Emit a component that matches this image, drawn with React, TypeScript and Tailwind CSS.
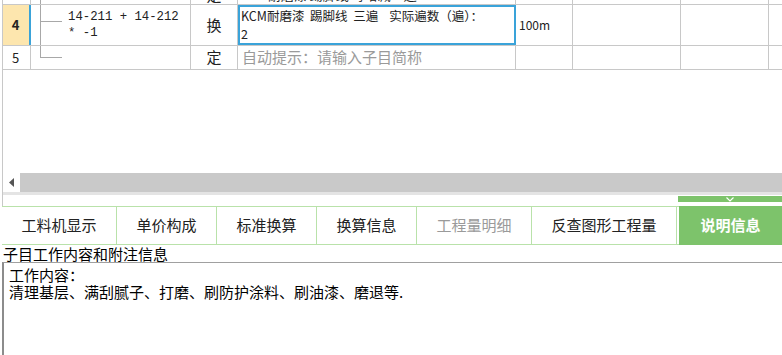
import React from 'react'

const cjk = "font-['Noto_Sans_CJK_SC','Noto_Sans',sans-serif]"
const mono = "font-['Liberation_Mono','Noto_Sans_CJK_SC',monospace]"

const tabs = [
  { label: '工料机显示', w: 'w-[115px]' },
  { label: '单价构成', w: 'w-[100px]' },
  { label: '标准换算', w: 'w-[100px]' },
  { label: '换算信息', w: 'w-[100px]' },
  { label: '工程量明细', w: 'w-[115px]', muted: true },
  { label: '反查图形工程量', w: 'w-[145px]' },
]

// 树形连接线
function Connector({ top }: { top: string }) {
  return (
    <div className="ml-[9px] flex h-full w-[22px] flex-col">
      <div className={`${top} border-b border-l border-[#a8a8a8]`} />
      <div className="flex-1 border-l border-[#a8a8a8]" />
    </div>
  )
}

export default function App() {
  return (
    <div className={`h-[355px] w-[782px] overflow-hidden bg-white text-[#222] ${cjk}`}>
      {/* 表格区 */}
      <div className="ml-[2px] flex h-[206px] flex-col border-l border-[#c8c8c8]">
        {/* 第3行，只露出下沿 */}
        <div className="flex h-[5px] overflow-hidden border-b border-[#c8c8c8]">
          <div className="w-[28px] border-r border-[#c8c8c8]" />
          <div className="w-[160px] border-r border-[#c8c8c8]">
            <div className="ml-[9px] h-full w-[22px] border-l border-[#a8a8a8]" />
          </div>
          <div className="w-[47px] border-r border-[#c8c8c8] text-center text-[15px] leading-[18px]">
            <div className="mt-[-14px]">定</div>
          </div>
          <div className="w-[278px] border-r border-[#c8c8c8] pl-[3px] text-[13px] leading-[18px]">
            <div className="mt-[-14px] whitespace-nowrap">KCM耐磨漆 踢脚线 每增减一遍</div>
          </div>
          <div className="w-[57px] border-r border-[#c8c8c8]" />
          <div className="w-[108px] border-r border-[#c8c8c8]" />
          <div className="w-[88px] border-r border-[#c8c8c8]" />
          <div className="flex-1" />
        </div>

        {/* 第4行（选中） */}
        <div className="flex h-[41px] border-b border-[#c8c8c8]">
          <div className="flex w-[28px] items-center justify-center border-r-2 border-[#3aa3d9] bg-[#fde6ae] pr-[1px] text-[13px] font-bold">
            4
          </div>
          <div className="flex w-[160px] border-r border-[#c8c8c8]">
            <Connector top="h-[17px]" />
            <div className={`flex flex-col justify-center pl-[6px] text-[12.3px] leading-[16px] ${mono}`}>
              <div className="whitespace-pre">14-211 + 14-212</div>
              <div className="whitespace-pre">* -1</div>
            </div>
          </div>
          <div className="flex w-[47px] items-center justify-center border-r border-[#c8c8c8] text-[15px]">
            换
          </div>
          <div className="flex w-[278px] flex-col justify-center border-2 border-[#3aa3d9] pl-[1px] text-[12.5px] leading-[18px]">
            <div className="whitespace-nowrap">KCM耐磨漆&nbsp;&nbsp;踢脚线&nbsp;&nbsp;三遍&nbsp;&nbsp;&nbsp;&nbsp;实际遍数（遍）：</div>
            <div>2</div>
          </div>
          <div className="flex w-[57px] items-center border-r border-[#c8c8c8] pl-[3px] text-[12px]">
            100m
          </div>
          <div className="w-[108px] border-r border-[#c8c8c8]" />
          <div className="w-[88px] border-r border-[#c8c8c8]" />
          <div className="flex-1" />
        </div>

        {/* 第5行 */}
        <div className="flex h-[24px] border-b border-[#c8c8c8]">
          <div className="flex w-[28px] items-center pl-[9px] border-r border-[#c8c8c8] text-[13px]">
            5
          </div>
          <div className="flex w-[160px] border-r border-[#c8c8c8]">
            <div className="ml-[9px] flex h-full w-[22px] flex-col">
              <div className="h-[12px] border-b border-l border-[#a8a8a8]" />
            </div>
          </div>
          <div className="flex w-[47px] items-center justify-center border-r border-[#c8c8c8] text-[15px]">
            定
          </div>
          <div className="flex w-[278px] items-center whitespace-nowrap border-r border-[#c8c8c8] pl-[4px] text-[15px] text-[#9a9a9a]">
            自动提示：请输入子目简称
          </div>
          <div className="w-[57px] border-r border-[#c8c8c8]" />
          <div className="w-[108px] border-r border-[#c8c8c8]" />
          <div className="w-[88px] border-r border-[#c8c8c8]" />
          <div className="flex-1" />
        </div>

        <div className="flex-1" />

        {/* 横向滚动条 */}
        <div className="flex h-[19px]">
          <div className="flex w-[17px] items-center justify-start bg-white pl-[6px]">
            <svg width="5" height="9" viewBox="0 0 5 9">
              <path d="M5 0 L0 4.5 L5 9 Z" fill="#555" />
            </svg>
          </div>
          <div className="flex-1 bg-[#c9c9c9]" />
        </div>
        <div className="h-[3px] bg-[#e4e4e4]" />
        <div className="flex h-[11px] justify-end pt-[1px]">
          <div className="flex h-[6px] w-[104px] items-center justify-center bg-[#7dc36b]">
            <svg width="8" height="5" viewBox="0 0 8 5">
              <path d="M0.5 0.5 L4 4 L7.5 0.5" fill="none" stroke="#fff" strokeWidth="1.2" />
            </svg>
          </div>
        </div>
      </div>

      {/* 标签页 */}
      <div className="ml-[2px] flex h-[39px] border-y border-[#b9e2aa]">
        {tabs.map((t) => (
          <div
            key={t.label}
            className={`flex ${t.w} items-center justify-center border-r border-[#b9e2aa] text-[15px] ${t.muted ? 'text-[#9a9a9a]' : 'text-[#222]'}`}
          >
            {t.label}
          </div>
        ))}
        <div className="ml-[2px] mt-[-1px] mb-[-1px] flex flex-1 items-center justify-center bg-[#7dc36b] text-[15px] font-bold text-white">
          说明信息
        </div>
      </div>

      <div className="h-[17px] pl-[3px] text-[15px] leading-[17px] text-black whitespace-nowrap">
        子目工作内容和附注信息
      </div>

      {/* 说明内容 */}
      <div className="ml-[2px] h-[94px] border-l-2 border-t border-l-[#8c8c8c] border-t-[#a0a0a0] pl-[5px] pt-[3px] text-[15px] leading-[17px] text-black">
        <div>工作内容：</div>
        <div className="whitespace-nowrap">清理基层、满刮腻子、打磨、刷防护涂料、刷油漆、磨退等.</div>
      </div>
    </div>
  )
}
